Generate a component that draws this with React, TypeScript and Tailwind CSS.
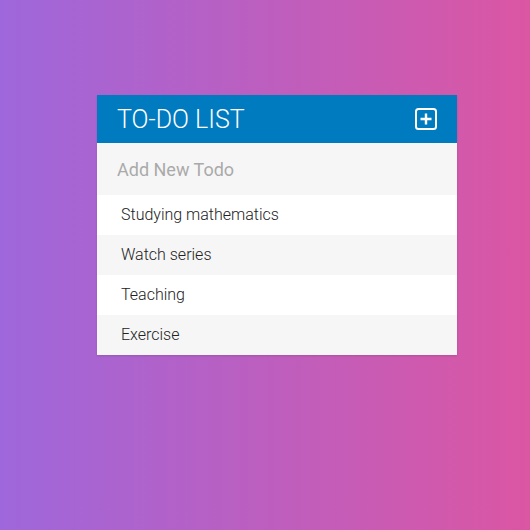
const todos = ["Studying mathematics", "Watch series", "Teaching", "Exercise"];

function PlusSquare() {
  return (
    <svg width="22" height="22" viewBox="0 0 22 22" fill="none" stroke="white">
      <rect x="1" y="1" width="20" height="20" rx="2.5" strokeWidth="2" />
      <path d="M11 5.5v11M5.5 11h11" strokeWidth="2.4" />
    </svg>
  );
}

export default function App() {
  return (
    <div
      className="w-[530px] h-[530px] bg-[linear-gradient(to_right,#9e67db,#db56a3)] pt-[95px] pl-[97px]"
      style={{ fontFamily: "Roboto, 'Liberation Sans', sans-serif" }}
    >
      <div className="w-[360px] bg-white shadow-[0_1px_2px_rgba(0,0,0,0.12)]">
        <div className="h-[48px] bg-[#017bbf] flex items-center justify-between pl-[20px] pr-[20px]">
          <h1 className="text-[25px] text-white font-light leading-none mt-[1px]">TO-DO LIST</h1>
          <PlusSquare />
        </div>
        <div className="h-[52px] bg-[#f6f6f6] flex items-center pl-[20px]">
          <input
            placeholder="Add New Todo"
            className="w-full bg-transparent outline-none text-[18px] text-[#333] placeholder:text-[#aaaaaa]"
          />
        </div>
        <ul>
          {todos.map((t, i) => (
            <li
              key={t}
              className={`h-[40px] flex items-center pl-[24px] text-[16px] font-light text-[#222] ${
                i % 2 === 1 ? "bg-[#f6f6f6]" : "bg-white"
              }`}
            >
              {t}
            </li>
          ))}
        </ul>
      </div>
    </div>
  );
}
